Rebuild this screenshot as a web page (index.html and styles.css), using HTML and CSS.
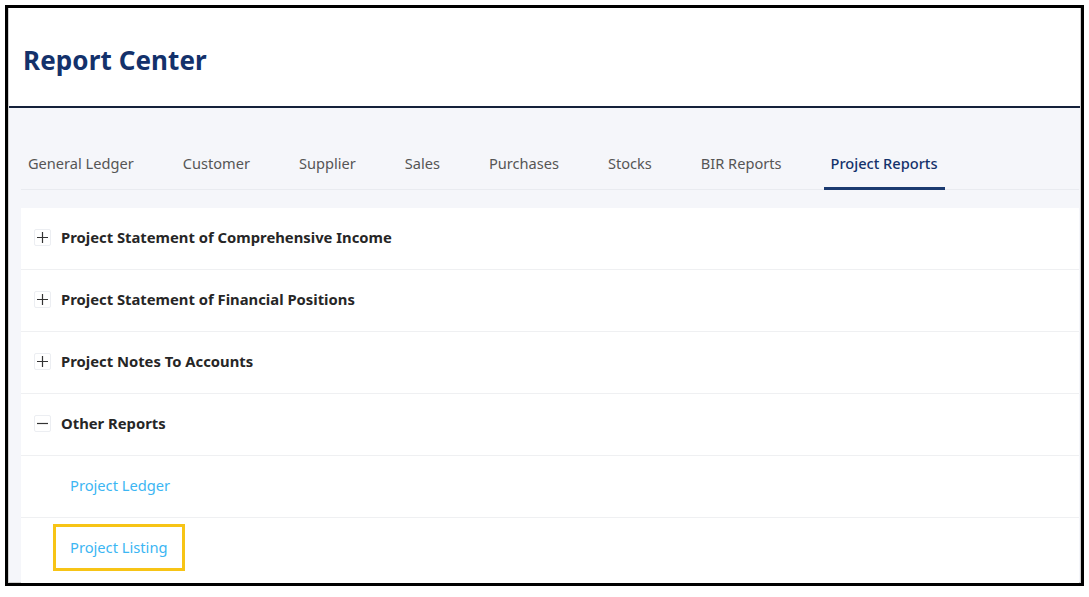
FILE: index.html
```html
<!DOCTYPE html>
<html>
<head>
<meta charset="utf-8">
<link rel="stylesheet" href="styles.css">
</head>
<body>
<div class="frame">
  <header class="head">
    <h1 class="title">Report Center</h1>
  </header>
  <main class="body">
    <nav class="tabs">
      <div class="tab">General Ledger</div>
      <div class="tab">Customer</div>
      <div class="tab">Supplier</div>
      <div class="tab">Sales</div>
      <div class="tab">Purchases</div>
      <div class="tab">Stocks</div>
      <div class="tab">BIR Reports</div>
      <div class="tab active">Project Reports</div>
    </nav>
    <section class="card">
      <div class="row"><span class="toggle"><svg width="11" height="11" viewBox="0 0 11 11"><path d="M0 5.5H11M5.5 0V11" stroke="#333" stroke-width="1.2"/></svg></span><span class="label">Project Statement of Comprehensive Income</span></div>
      <div class="row"><span class="toggle"><svg width="11" height="11" viewBox="0 0 11 11"><path d="M0 5.5H11M5.5 0V11" stroke="#333" stroke-width="1.2"/></svg></span><span class="label">Project Statement of Financial Positions</span></div>
      <div class="row"><span class="toggle"><svg width="11" height="11" viewBox="0 0 11 11"><path d="M0 5.5H11M5.5 0V11" stroke="#333" stroke-width="1.2"/></svg></span><span class="label">Project Notes To Accounts</span></div>
      <div class="row"><span class="toggle"><svg width="11" height="11" viewBox="0 0 11 11"><path d="M0 5.5H11" stroke="#333" stroke-width="1.2"/></svg></span><span class="label">Other Reports</span></div>
      <div class="row sub"><a class="link">Project Ledger</a></div>
      <div class="row sub last"><a class="link highlight">Project Listing</a></div>
    </section>
  </main>
</div>
</body>
</html>
```
FILE: styles.css
```css
* { box-sizing: border-box; }
html, body { margin: 0; padding: 0; background: #fff; }
body {
  font-family: "Noto Sans", "Open Sans", sans-serif;
  width: 1089px;
  height: 597px;
  overflow: hidden;
}
.frame {
  margin: 5px 5px 0 5px;
  width: 1079px;
  height: 581px;
  border: 3px solid #000;
  box-shadow: inset 0 0 0 1px #d0d0d0;
  display: flex;
  flex-direction: column;
  background: #f5f6fa;
  overflow: hidden;
}
.head {
  height: 100px;
  flex: none;
  background: #fff;
  border-bottom: 2px solid #14213a;
  display: flex;
  align-items: center;
  padding-left: 14px;
  margin: 0 1px;
}
.title {
  margin: 0;
  padding-top: 6px;
  font-size: 26px;
  font-weight: 700;
  color: #13316b;
  letter-spacing: 0.1px;
}
.body {
  flex: 1;
  padding: 0 2px 0 13px;
  display: flex;
  flex-direction: column;
}
.tabs {
  display: flex;
  gap: 35px;
  height: 82px;
  align-items: flex-end;
  border-bottom: 1px solid #e9ebf0;
}
.tab {
  padding: 0 7px 14px 7px;
  font-size: 14.6px;
  color: #555;
  border-bottom: 3px solid transparent;
  margin-bottom: -1px;
  line-height: 20px;
}
.tab.active {
  color: #13316b;
  font-weight: 500;
  border-bottom-color: #1b3a70;
}
.card {
  margin-top: 18px;
  background: #fff;
  flex: 1;
  display: flex;
  flex-direction: column;
}
.row {
  height: 62px;
  flex: none;
  display: flex;
  align-items: center;
  padding-left: 13px;
  padding-bottom: 3px;
  border-bottom: 1px solid #eff0f2;
}
.row.last { border-bottom: none; }
.toggle {
  width: 17px;
  height: 17px;
  border: 1px solid #eceef2;
  border-radius: 2px;
  display: flex;
  align-items: center;
  justify-content: center;
  margin-right: 10px;
}
.toggle svg { display: block; }
.label {
  font-size: 14.8px;
  font-weight: 700;
  color: #262626;
}
.row.sub { padding-left: 32px; }
.link {
  font-size: 14.7px;
  color: #3cb6f3;
  padding: 10px 14px 11px 14px;
  border: 3px solid transparent;
}
.link.highlight { border-color: #f7c416; }
```
